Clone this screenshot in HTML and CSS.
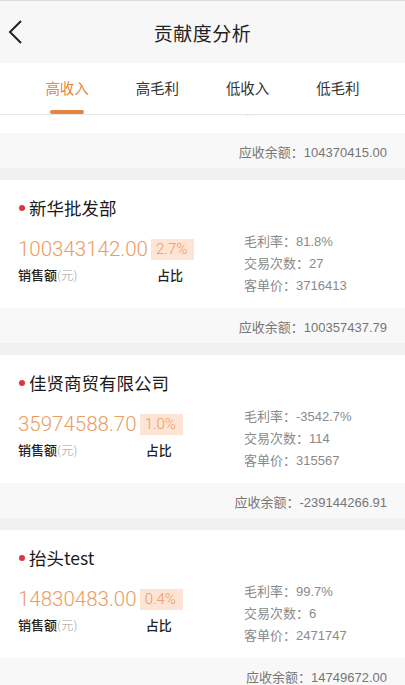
FILE: index.html
```html
<!DOCTYPE html>
<html lang="zh">
<head>
<meta charset="utf-8">
<title>贡献度分析</title>
<link rel="stylesheet" href="styles.css">
</head>
<body>
<div class="screen">
  <header class="header">
    <svg class="back" width="16" height="26" viewBox="0 0 16 26"><polyline points="13,2 2,13 13,24" fill="none" stroke="#222" stroke-width="2"/></svg>
    <h1 class="title">贡献度分析</h1>
  </header>
  <nav class="tabs">
    <div class="tab active">高收入<span class="bar"></span></div>
    <div class="tab">高毛利</div>
    <div class="tab">低收入</div>
    <div class="tab">低毛利</div>
  </nav>
  <div class="list">
    <div class="cards">
      <section class="card">
        <div class="card-main partial">
          <div class="stats partial-stats">
            <div>客单价：10441370</div>
          </div>
        </div>
        <div class="footer">应收余额：104370415.00</div>
      </section>
      <section class="card">
        <div class="card-main">
          <div class="name"><span class="dot"></span>新华批发部</div>
          <div class="body">
            <div class="left">
              <div class="amount">100343142.00</div>
              <div class="badge">2.7%</div>
              <div class="label">销售额<span class="unit">(元)</span></div>
              <div class="label share">占比</div>
            </div>
            <div class="stats">
              <div>毛利率：81.8%</div>
              <div>交易次数：27</div>
              <div>客单价：3716413</div>
            </div>
          </div>
        </div>
        <div class="footer">应收余额：100357437.79</div>
      </section>
      <section class="card">
        <div class="card-main">
          <div class="name"><span class="dot"></span>佳贤商贸有限公司</div>
          <div class="body">
            <div class="left">
              <div class="amount">35974588.70</div>
              <div class="badge">1.0%</div>
              <div class="label">销售额<span class="unit">(元)</span></div>
              <div class="label share">占比</div>
            </div>
            <div class="stats">
              <div>毛利率：-3542.7%</div>
              <div>交易次数：114</div>
              <div>客单价：315567</div>
            </div>
          </div>
        </div>
        <div class="footer">应收余额：-239144266.91</div>
      </section>
      <section class="card">
        <div class="card-main">
          <div class="name"><span class="dot"></span>抬头test</div>
          <div class="body">
            <div class="left">
              <div class="amount">14830483.00</div>
              <div class="badge">0.4%</div>
              <div class="label">销售额<span class="unit">(元)</span></div>
              <div class="label share">占比</div>
            </div>
            <div class="stats">
              <div>毛利率：99.7%</div>
              <div>交易次数：6</div>
              <div>客单价：2471747</div>
            </div>
          </div>
        </div>
        <div class="footer">应收余额：14749672.00</div>
      </section>
    </div>
  </div>
</div>
</body>
</html>
```
FILE: styles.css
```css
* { box-sizing: border-box; margin: 0; padding: 0; }
html, body { background: #f1f1f1; }
body {
  margin: 0;
  font-family: "Liberation Sans", "Noto Sans CJK SC", sans-serif;
  color: #222;
}
.screen {
  width: 405px;
  height: 685px;
  display: flex;
  flex-direction: column;
  overflow: hidden;
  background: #f1f1f1;
}
.header {
  height: 63px;
  flex: none;
  background: #f7f7f7;
  border-top: 1px solid #dcdcdc;
  display: flex;
  align-items: center;
  justify-content: center;
  position: relative;
}
.back {
  position: absolute;
  left: 8px;
  top: 18px;
}
.title {
  font-family: "Noto Sans CJK SC", sans-serif;
  font-size: 19px;
  font-weight: 400;
  color: #222;
  letter-spacing: 0.5px;
}
.tabs {
  height: 52px;
  flex: none;
  background: #fff;
  border-bottom: 1px solid #e6e6e6;
  display: grid;
  grid-template-columns: repeat(4, 1fr);
  padding: 0 22px;
  position: relative;
  z-index: 2;
}
.tab {
  font-family: "Noto Sans CJK SC", sans-serif;
  font-size: 14.5px;
  color: #333;
  display: flex;
  align-items: center;
  justify-content: center;
  position: relative;
  padding-bottom: 2px;
}
.tab.active { color: #e8843f; }
.tab .bar {
  position: absolute;
  bottom: 0;
  left: 50%;
  width: 34px;
  margin-left: -17px;
  height: 4px;
  border-radius: 2px;
  background: #e8823f;
}
.list {
  flex: 1;
  overflow: hidden;
}
.cards {
  margin-top: -110px;
  display: flex;
  flex-direction: column;
  gap: 12px;
}
.card { display: flex; flex-direction: column; }
.card-main {
  background: #fff;
  height: 128px;
  padding: 16px 18px 0 18px;
}
.card-main.partial {
  display: flex;
  flex-direction: column;
  justify-content: flex-end;
  padding: 0 18px 13px 244px;
}
.name {
  font-family: "Noto Sans CJK SC", sans-serif;
  font-size: 17.5px;
  line-height: 24px;
  height: 24px;
  color: #1a1a1a;
  display: flex;
  align-items: center;
}
.dot {
  width: 6px;
  height: 6px;
  border-radius: 50%;
  background: #e0353d;
  margin-left: 1px;
  margin-right: 4px;
}
.body {
  display: flex;
  margin-top: 11px;
}
.left {
  width: 226px;
  height: 66px;
  flex: none;
  display: grid;
  grid-template-columns: auto auto;
  grid-template-rows: 24px 18px;
  justify-content: start;
  align-content: start;
  align-items: center;
  column-gap: 3px;
  padding-top: 6px;
  row-gap: 5px;
}
.amount {
  font-family: Roboto, "Liberation Sans", sans-serif;
  font-weight: 300;
  font-size: 20.5px;
  line-height: 24px;
  height: 24px;
  color: #eb9d62;
}
.badge {
  font-family: Roboto, "Liberation Sans", sans-serif;
  font-weight: 300;
  background: #fde4d4;
  color: #eb9a60;
  font-size: 15px;
  line-height: 21px;
  height: 21px;
  padding: 0 7px 0 5px;
  justify-self: start;
}
.label {
  font-family: "Noto Sans CJK SC", sans-serif;
  font-size: 13px;
  line-height: 18px;
  height: 18px;
  color: #222;
  font-weight: 500;
  white-space: nowrap;
}
.label .unit {
  color: #a0a0a0;
  font-weight: 300;
  font-size: 12.5px;
}
.share { padding-left: 6px; }
.stats {
  font-family: "Liberation Sans", "Noto Sans CJK SC", sans-serif;
  font-size: 13px;
  line-height: 22px;
  color: #8a8a8a;
}
.footer {
  height: 35px;
  background: #f8f8f8;
  font-family: "Liberation Sans", "Noto Sans CJK SC", sans-serif;
  font-size: 13px;
  color: #767676;
  display: flex;
  align-items: center;
  justify-content: flex-end;
  padding-right: 18px;
  padding-top: 2px;
}
```
